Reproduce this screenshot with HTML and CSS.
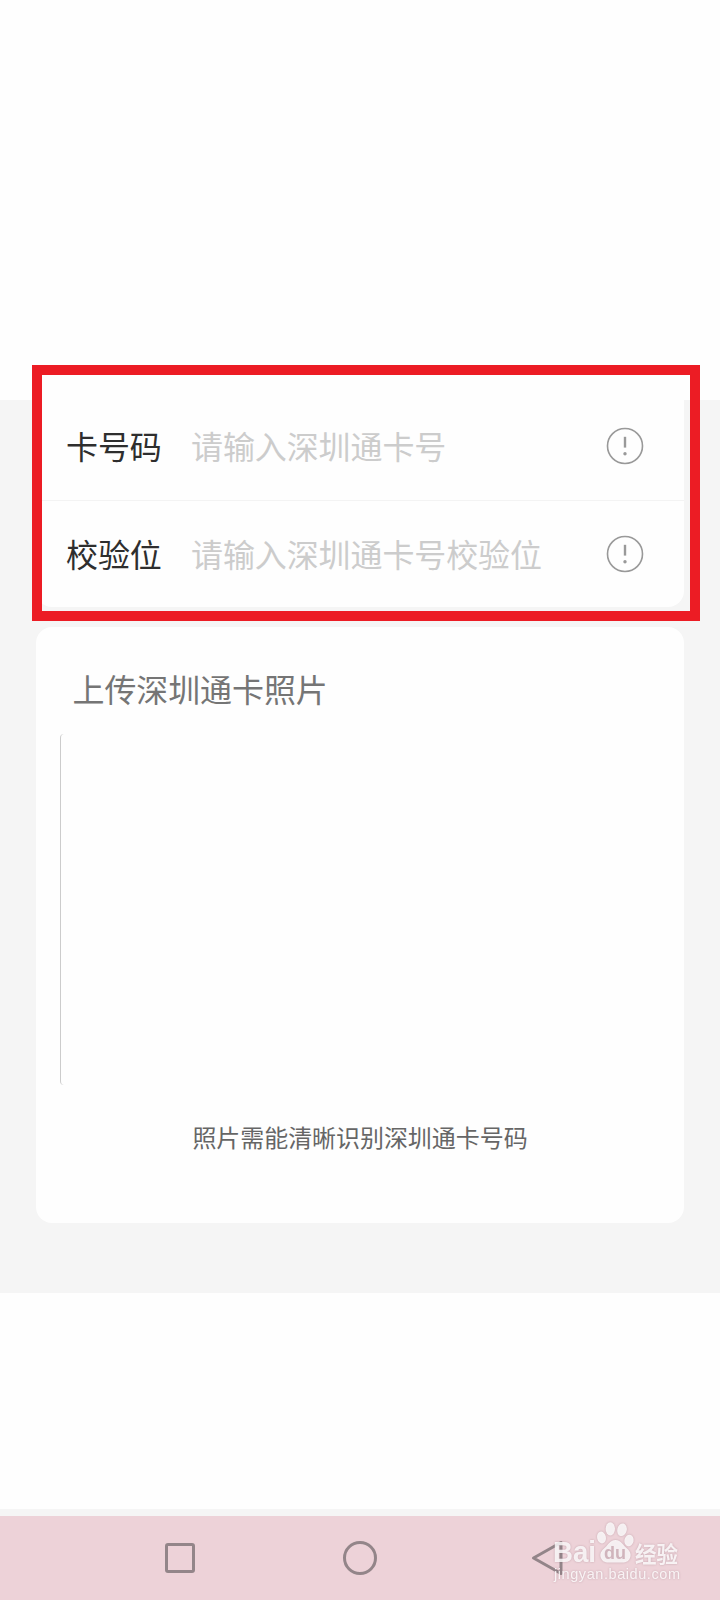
FILE: index.html
```html
<!DOCTYPE html>
<html lang="zh-CN">
<head>
<meta charset="utf-8">
<title>深圳通卡</title>
<link rel="stylesheet" href="styles.css">
</head>
<body>
<div class="screen">
  <header class="top"></header>
  <main class="content">
    <section class="card form">
      <div class="row">
        <span class="label">卡号码</span>
        <span class="placeholder">请输入深圳通卡号</span>
        <svg class="info" viewBox="0 0 38 38"><circle cx="19" cy="19" r="17.5"/><path d="M19 9.800v10.800"/><circle class="dot" cx="19" cy="26.800" r="1.700"/></svg>
      </div>
      <div class="row">
        <span class="label">校验位</span>
        <span class="placeholder">请输入深圳通卡号校验位</span>
        <svg class="info" viewBox="0 0 38 38"><circle cx="19" cy="19" r="17.5"/><path d="M19 9.800v10.800"/><circle class="dot" cx="19" cy="26.800" r="1.700"/></svg>
      </div>
    </section>
    <section class="card upload">
      <h2 class="title">上传深圳通卡照片</h2>
      <div class="photo"></div>
      <p class="hint">照片需能清晰识别深圳通卡号码</p>
    </section>
    <div class="highlight"></div>
  </main>
  <div class="blank"></div>
  <nav class="navbar">
    <svg class="keys" viewBox="0 0 720 84">
      <g class="key">
        <rect x="166.5" y="28.5" width="27" height="27" rx="1.5"/>
        <circle cx="360" cy="42" r="15.5"/>
        <path d="M561 26.500v31l-27.500-15.500z"/>
      </g>
    </svg>
    <svg class="watermark" viewBox="0 0 140 74">
      <g class="mark">
        <text class="brand" x="3" y="46" textLength="43" lengthAdjust="spacingAndGlyphs">Bai</text>
        <ellipse cx="51.500" cy="21.500" rx="4.400" ry="6" transform="rotate(-12 51.5 21.5)"/>
        <ellipse cx="60.300" cy="12.800" rx="4.700" ry="6.600"/>
        <ellipse cx="72" cy="13.800" rx="4.700" ry="6.400" transform="rotate(14 72 13.8)"/>
        <ellipse cx="79" cy="24.500" rx="4.600" ry="5.800" transform="rotate(10 79 24.5)"/>
        <path d="M65.500 24c6 0 7.500 5.500 11.500 8.500 4 3.500 4.500 7 2.500 10.500-2.200 4-6 3.600-14 3.400-8 .2-12 .6-14-3.400-2-3.500-1.500-7 2.500-10.500C58 29.500 59.500 24 65.500 24z"/>
        <text class="cn" x="85" y="45.500" textLength="43" lengthAdjust="spacingAndGlyphs">经验</text>
        <text class="site" x="4" y="63" textLength="126" lengthAdjust="spacing">jingyan.baidu.com</text>
      </g>
      <text class="du" x="54" y="43" textLength="22" lengthAdjust="spacingAndGlyphs">du</text>
    </svg>
  </nav>
</div>
</body>
</html>
```

FILE: styles.css
```css
* { box-sizing: border-box; }
body {
  margin: 0;
  background: #fefefe;
  font-family: "Noto Sans CJK SC", "Liberation Sans", sans-serif;
}
.screen {
  width: 720px;
  height: 1600px;
  display: flex;
  flex-direction: column;
}
.top { height: 400px; background: #fefefe; }
.content {
  position: relative;
  height: 893px;
  padding: 0 36px;
  background: #f5f5f5;
}
.card { background: #fefefe; border-radius: 16px; }
.form { height: 214px; margin-top: -7px; border-radius: 0 0 16px 16px; }
.row {
  display: flex;
  align-items: center;
  height: 107px;
  padding: 0 40px 0 30px;
}
.row + .row { border-top: 1px solid #f3f3f3; }
.label, .placeholder, .title {
  font-size: 32px;
  line-height: 40px;
  letter-spacing: -0.100px;
  font-weight: 400;
  white-space: nowrap;
}
.label, .placeholder { padding-bottom: 3px; }
.label { width: 125px; color: #2e2e2e; }
.placeholder { flex: 1; color: #ccc; }
.info {
  width: 38px;
  height: 38px;
  margin-bottom: 1px;
  fill: none;
  stroke: #999;
  stroke-width: 1.600px;
}
.info path { stroke-width: 2.400px; }
.info .dot { fill: #999; stroke: none; }
.upload {
  height: 596px;
  margin-top: 20px;
  padding: 41px 24px 0;
}
.title { margin: 0 0 0 12.500px; color: #757575; }
.photo {
  height: 351px;
  margin-top: 26px;
  border-left: 1px solid #ccc;
  border-radius: 4px;
}
.hint {
  margin: 34px 0 0;
  color: #666;
  font-size: 24px;
  line-height: 36px;
  letter-spacing: -0.060px;
  text-align: center;
}
/* Marks the two fields that have to be filled in */
.highlight {
  position: absolute;
  left: 32px;
  top: -35px;
  width: 668px;
  height: 256px;
  border: 10px solid #ec1c24;
}
.blank { height: 216px; }
.navbar {
  position: relative;
  height: 91px;
  border-top: 7px solid #f5f5f5;
  background: #edd2d8;
}
.keys { display: block; width: 720px; height: 84px; }
.key { fill: none; stroke: #938589; stroke-width: 3px; stroke-linejoin: round; }
.watermark {
  position: absolute;
  left: 550px;
  top: 0;
  width: 140px;
  height: 74px;
  filter: drop-shadow(0 0 1px rgba(120, 80, 95, 0.400));
}
.mark { fill: #fff; opacity: 0.820; }
.brand { font: bold 29px "Liberation Sans", sans-serif; }
.cn { font: bold 22px "Noto Sans CJK SC", sans-serif; }
.site { font: 14.500px "Liberation Sans", sans-serif; }
.du { font: bold 19px "Liberation Sans", sans-serif; fill: #d0b4bc; }
```
